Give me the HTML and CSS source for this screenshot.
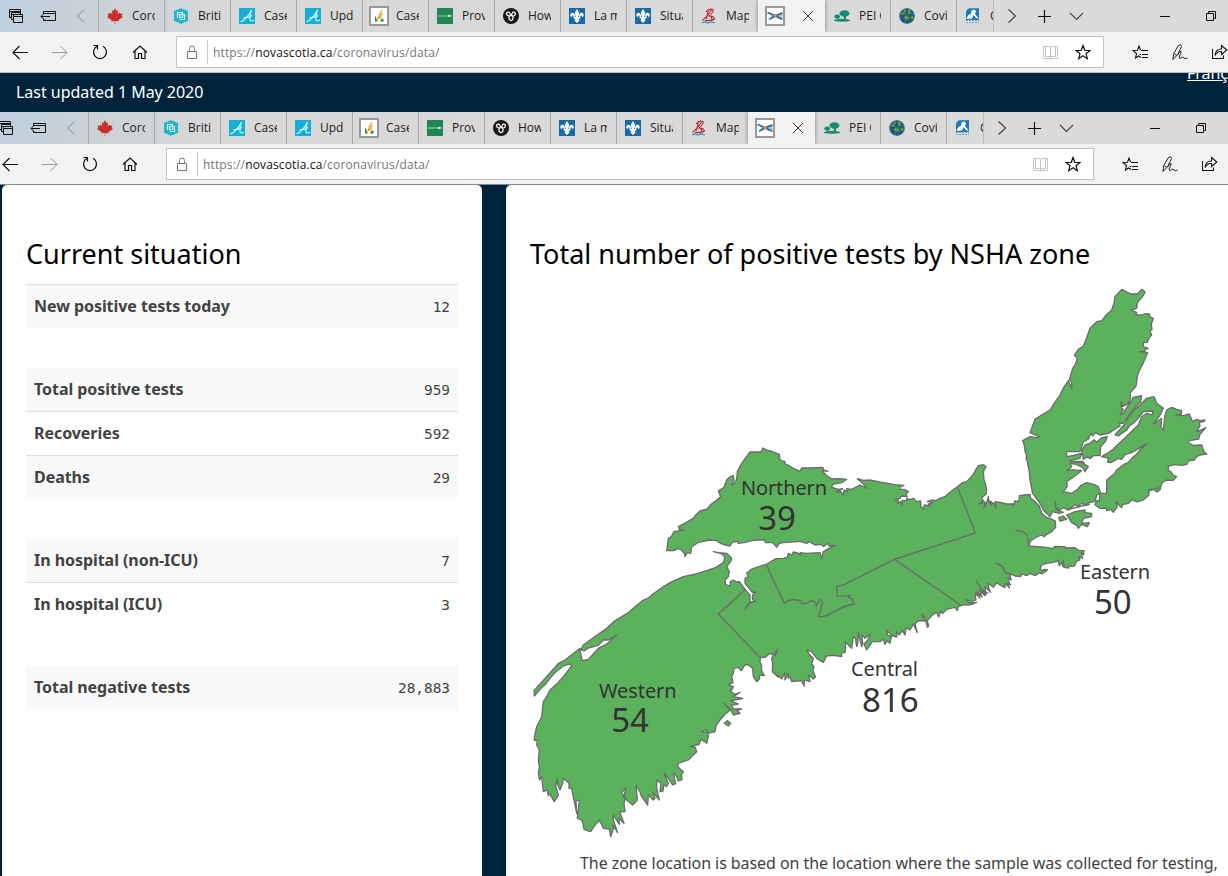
FILE: index.html
```html
<!DOCTYPE html>
<html lang="en">
<head>
<meta charset="utf-8">
<title>Nova Scotia COVID-19 data</title>
<link rel="stylesheet" href="styles.css">
</head>
<body>
<svg class="sprite" aria-hidden="true">
  <symbol id="i-windows" viewBox="0 0 16 16"><path d="M1.5 9.500V1.500H12.500M1.500 3.500H12M3.500 11.500V4.500H12.500M3.500 6.500H12M5.500 14.500V6.500H14.500V14.500H5.500ZM5.500 8.500H14.500M1.500 9.500H3.500M3.500 11.500H5.500M12.500 1.500V6" fill="none" stroke="#111"/></symbol>
  <symbol id="i-aside" viewBox="0 0 16 16"><path d="M3.500 6V3.500H15.500V12.500H3.500V10.500M3.500 5.500H15.500M1 8.500H10M4 5.500L1 8.500L4 11.500" fill="none" stroke="#111"/></symbol>
  <symbol id="i-prev" viewBox="0 0 16 16"><path d="M12.500 1.500L5.500 8L12.500 14.500" fill="none" stroke="#8b8f93"/></symbol>
  <symbol id="i-next" viewBox="0 0 16 16"><path d="M4.500 1.500L11.500 8L4.500 14.500" fill="none" stroke="#444" stroke-width="1.200"/></symbol>
  <symbol id="i-plus" viewBox="0 0 16 16"><path d="M8.500 2V15M2 8.500H15" fill="none" stroke="#111" stroke-width="1.200"/></symbol>
  <symbol id="i-down" viewBox="0 0 16 16"><path d="M2 5L8.500 11.500L15 5" fill="none" stroke="#444" stroke-width="1.100"/></symbol>
  <symbol id="i-min" viewBox="0 0 16 16"><path d="M3 8.500H13" stroke="#111"/></symbol>
  <symbol id="i-restore" viewBox="0 0 16 16"><path d="M3.500 5.500H10.500V12.500H3.500ZM5.500 5V3.500H12.500V10.500H11" fill="none" stroke="#111"/></symbol>
  <symbol id="i-x" viewBox="0 0 16 16"><path d="M3 3L13 13M13 3L3 13" stroke="#333"/></symbol>
  <symbol id="i-back" viewBox="0 0 16 16"><path d="M16 8.500H1M7.500 2L1 8.500L7.500 15" fill="none" stroke="#111" stroke-width="1.100"/></symbol>
  <symbol id="i-fwd" viewBox="0 0 16 16"><path d="M0 8.500H15M8.500 2L15 8.500L8.500 15" fill="none" stroke="#999"/></symbol>
  <symbol id="i-refresh" viewBox="0 0 16 16"><path d="M5 2.300A6.500 6.500 0 1 0 11 2.300M1.500 1.500H5.500V5.500" fill="none" stroke="#111" stroke-width="1.200"/></symbol>
  <symbol id="i-home" viewBox="0 0 16 16"><path d="M1 8.500L8 2L15 8.500M3 7V14.500H6.500V9.500H9.500V14.500H13V7" fill="none" stroke="#111" stroke-width="1.200"/></symbol>
  <symbol id="i-lock" viewBox="0 0 16 16"><path d="M3.500 7.500H12.500V14.500H3.500ZM5.500 7.500V4.500A2.500 2.500 0 0 1 10.500 4.500V7.500" fill="none" stroke="#777"/></symbol>
  <symbol id="i-book" viewBox="0 0 16 16"><path d="M1.500 2.500H7L8.500 3.500L10 2.500H15.500V14.500H10L8.500 15L7 14.500H1.500ZM3.500 3V12.500H7L8.500 13.500L10 12.500H13.500V3M8.500 3V15" fill="none" stroke="#c4c4c4"/></symbol>
  <symbol id="i-star" viewBox="0 0 16 16"><path d="M8 1.500L9.800 6.300L15 6.500L11 9.700L12.300 14.700L8 11.800L3.700 14.700L5 9.700L1 6.500L6.200 6.300Z" fill="none" stroke="#111" stroke-width="1.200"/></symbol>
  <symbol id="i-favs" viewBox="0 0 16 16"><path d="M9 6.500H16M10 10.500H16M10 13.500H16M8.500 6L7 2L5.500 6.300L1 6.500L4.500 9.500L3.500 14L6.500 12L9 13.500M7.500 10.500H9" fill="none" stroke="#111" stroke-width="1.100"/></symbol>
  <symbol id="i-pen" viewBox="0 0 16 16"><path d="M.8 15.500L2 9L6.500 1.500Q9 -.500 9.500 2.500L5.500 11L.8 15.500M5.500 11Q8 6.500 9 7.500Q9.500 8.500 7.500 12Q6.500 15.500 9 14Q11 12 12 14Q13 15.500 15.500 14M2.500 10L5 11.500" fill="none" stroke="#222"/></symbol>
  <symbol id="i-share" viewBox="0 0 16 16"><path d="M.5 5V14.500H11.500V11.500M3 11.500Q3.500 5 9.500 5V1.500L14.800 6L9.500 10.500V7.500Q5.500 7 3 11.500Z" fill="none" stroke="#111" stroke-width="1.100"/></symbol>

  <symbol id="f-leaf" viewBox="0 0 16 16"><path d="M8 0L9.500 3L11.200 2.200L10.600 6.200L12.800 4.500L13.500 5.700H15.500L14.700 8L16 9L11.500 12L11.800 13.300L8.300 12.900V16H7.700V12.900L4.200 13.300L4.500 12L0 9L1.300 8L.5 5.700H2.500L3.200 4.500L5.400 6.200L4.800 2.200L6.500 3Z" fill="#c9302c"/></symbol>
  <symbol id="f-bc" viewBox="0 0 16 16"><path d="M8 .2L15 3V12.800L8 15.800L1 12.800V3Z" fill="#22b5c9"/><path d="M4.500 10V4.500H9.500V9.500H6.500V6.500H11.500V11.500H6.500" fill="none" stroke="#e4f8fa" stroke-width="1.100"/></symbol>
  <symbol id="f-alberta" viewBox="0 0 16 16"><path d="M0 0H16V16H0Z" fill="#15aed4"/><path d="M1.500 14Q8 11 12.500 2Q10.500 7 11 12Q12 14 15 12M4.500 9.500Q9 10 13 7.500" fill="none" stroke="#d5f4fb" stroke-width="1.200"/></symbol>
  <symbol id="f-sask" viewBox="0 0 20 20"><path d="M1 1H19V19H1Z" fill="#fff" stroke="#999" stroke-width="2"/><path d="M6 15.500V9.500L9 15.500ZM11 15.500Q13 11 14.500 13V15.500Z" fill="#168052"/><path d="M5 17Q9 13 10 8Q11 5 14 3Q13 6 11.500 8L14.500 7Q13 9.500 11 11L14 10.500Q11 14 9 13" fill="#e9aa36"/></symbol>
  <symbol id="f-prov" viewBox="0 0 16 16"><path d="M0 0H16V16H0Z" fill="#208653"/><path d="M1 8H10" stroke="#cce7d8" stroke-width="1" stroke-dasharray="1.500 .5"/><path d="M10 8L12 6.800L15 8L12 9Z" fill="#fff"/></symbol>
  <symbol id="f-ont" viewBox="0 0 16 16"><circle cx="8" cy="8" r="8" fill="#181818"/><path d="M3.500 6Q3.500 3.800 6 4.200L8 7.300L10 4.200Q12.500 3.800 12.500 6Q12 8 9.700 8.200Q11 11.500 8 12.700Q5 11.500 6.300 8.200Q4 8 3.500 6ZM6.300 8.200L8 7.300L9.700 8.200" fill="none" stroke="#fff" stroke-width="1.200"/></symbol>
  <symbol id="f-que" viewBox="0 0 16 16"><path d="M0 0H16V16H0Z" fill="#176aa8"/><path d="M8 1Q11.500 5 9 9H10Q10 4 13.500 5Q16 7 13.500 9.500Q13.500 7 12 7.500Q11 8 11.500 10.500H9.500L10.500 12.500L8 15L5.500 12.500L6.500 10.500H4.500Q5 8 4 7.500Q2.500 7 2.500 9.500Q0 7 2.500 5Q6 4 6 9H7Q4.500 5 8 1Z" fill="#fff"/></symbol>
  <symbol id="f-nb" viewBox="0 0 16 16"><path d="M5 4Q8 0 12 1.500Q13 4 8 8Q13 8 13.500 11Q11 13 4 12.500M1.500 12.500Q6 9 10.500 2M5 11Q7 6 7 3M10 8L11 12" fill="none" stroke="#bd252e" stroke-width="1.100"/><path d="M1 15L4 13.800L7 15L10 13.800L14 15" fill="none" stroke="#3b94c9" stroke-width="1.300"/></symbol>
  <symbol id="f-ns" viewBox="0 0 20 20"><path d="M1 1H19V19H1Z" fill="#fff" stroke="#999" stroke-width="2"/><path d="M2.500 6.500Q6 8.500 10 8.500Q14 8 17.500 6.500V13.500Q14 13.500 10 11.500Q7 13.500 4 13.500Q7 11.500 5.500 9Z" fill="#9fc0de"/><path d="M2.500 6.500Q10 9 17.500 13.500M17.500 7Q10 9 4 13.500" fill="none" stroke="#245a99" stroke-width="1.400"/><path d="M8.500 8.500L11.500 11M11.500 8L9 11.500" stroke="#e88c35" stroke-width="1.300"/></symbol>
  <symbol id="f-pei" viewBox="0 0 16 16"><path d="M0 12Q8 9.500 16 12V13Q8 14.500 0 13ZM10 8H12V12H10ZM3 10H4V12H3Z" fill="#168b70"/><ellipse cx="10.500" cy="5.500" rx="5" ry="3.200" fill="#168b70"/><ellipse cx="3.200" cy="8.500" rx="2.800" ry="2" fill="#168b70"/></symbol>
  <symbol id="f-globe" viewBox="0 0 16 16"><circle cx="8" cy="8" r="7.800" fill="#24698e"/><path d="M2 5L5 2L7 3L5 6L3 7ZM8 3L11 1.500L13 5L10 6ZM5 8L9 7L10 10L7 13ZM11 8L14.500 8L13 12Z" fill="#83ba3b"/><path d="M1 8H15M8 0V16M2 4H14M2 12H14M4 2V14M12 2V14" stroke="#193e46" stroke-width=".8" opacity=".7"/></symbol>
  <symbol id="f-nl" viewBox="0 0 16 16"><path d="M1 4Q2 .5 5 .3H14V12H1Z" fill="#1d7ab8"/><path d="M1.500 11Q3 6 6 6L6.500 2.500L9 1.500L11 3L10 6L14 11L11 10L8.500 7L7 10.500Z" fill="#fff"/><path d="M1 12.500H14M1 14.500H14" stroke="#6ba7cf" stroke-dasharray="2 1"/></symbol>
</svg>

<section class="window">
  <header class="chrome">
    <div class="tabstrip">
      <div class="lead"><svg><use href="#i-windows"/></svg><svg><use href="#i-aside"/></svg><svg><use href="#i-prev"/></svg></div>
      <div class="tab"><svg><use href="#f-leaf"/></svg><span>Coro</span></div>
      <div class="tab"><svg><use href="#f-bc"/></svg><span>Briti</span></div>
      <div class="tab"><svg><use href="#f-alberta"/></svg><span>Case</span></div>
      <div class="tab"><svg><use href="#f-alberta"/></svg><span>Upd</span></div>
      <div class="tab"><svg class="framed"><use href="#f-sask"/></svg><span>Case</span></div>
      <div class="tab"><svg><use href="#f-prov"/></svg><span>Prov</span></div>
      <div class="tab"><svg><use href="#f-ont"/></svg><span>How</span></div>
      <div class="tab"><svg><use href="#f-que"/></svg><span>La m</span></div>
      <div class="tab"><svg><use href="#f-que"/></svg><span>Situa</span></div>
      <div class="tab"><svg><use href="#f-nb"/></svg><span>Map</span></div>
      <div class="tab active"><svg class="framed"><use href="#f-ns"/></svg><svg class="close"><use href="#i-x"/></svg></div>
      <div class="tab after"><svg><use href="#f-pei"/></svg><span>PEI C</span></div>
      <div class="tab"><svg><use href="#f-globe"/></svg><span>Covi</span></div>
      <div class="tab cut"><svg><use href="#f-nl"/></svg><span>C</span></div>
      <div class="strip-actions"><svg><use href="#i-next"/></svg><svg><use href="#i-plus"/></svg><svg><use href="#i-down"/></svg></div>
      <div class="window-actions"><svg><use href="#i-min"/></svg><svg><use href="#i-restore"/></svg></div>
    </div>
    <nav class="toolbar">
      <div class="tools"><svg><use href="#i-back"/></svg><svg><use href="#i-fwd"/></svg><svg><use href="#i-refresh"/></svg><svg><use href="#i-home"/></svg></div>
      <div class="address"><svg class="lock"><use href="#i-lock"/></svg><span class="url">https://<b>novascotia.ca</b>/coronavirus/data/</span><svg><use href="#i-book"/></svg><svg><use href="#i-star"/></svg></div>
      <div class="tools"><svg><use href="#i-favs"/></svg><svg><use href="#i-pen"/></svg><svg><use href="#i-share"/></svg></div>
    </nav>
  </header>
  <div class="updated"><span>Last updated 1 May 2020</span><a class="lang">Français</a></div>
</section>

<section class="window inner">
  <header class="chrome">
    <div class="tabstrip">
      <div class="lead"><svg><use href="#i-windows"/></svg><svg><use href="#i-aside"/></svg><svg><use href="#i-prev"/></svg></div>
      <div class="tab"><svg><use href="#f-leaf"/></svg><span>Coro</span></div>
      <div class="tab"><svg><use href="#f-bc"/></svg><span>Briti</span></div>
      <div class="tab"><svg><use href="#f-alberta"/></svg><span>Case</span></div>
      <div class="tab"><svg><use href="#f-alberta"/></svg><span>Upd</span></div>
      <div class="tab"><svg class="framed"><use href="#f-sask"/></svg><span>Case</span></div>
      <div class="tab"><svg><use href="#f-prov"/></svg><span>Prov</span></div>
      <div class="tab"><svg><use href="#f-ont"/></svg><span>How</span></div>
      <div class="tab"><svg><use href="#f-que"/></svg><span>La m</span></div>
      <div class="tab"><svg><use href="#f-que"/></svg><span>Situa</span></div>
      <div class="tab"><svg><use href="#f-nb"/></svg><span>Map</span></div>
      <div class="tab active"><svg class="framed"><use href="#f-ns"/></svg><svg class="close"><use href="#i-x"/></svg></div>
      <div class="tab after"><svg><use href="#f-pei"/></svg><span>PEI C</span></div>
      <div class="tab"><svg><use href="#f-globe"/></svg><span>Covi</span></div>
      <div class="tab cut"><svg><use href="#f-nl"/></svg><span>C</span></div>
      <div class="strip-actions"><svg><use href="#i-next"/></svg><svg><use href="#i-plus"/></svg><svg><use href="#i-down"/></svg></div>
      <div class="window-actions"><svg><use href="#i-min"/></svg><svg><use href="#i-restore"/></svg></div>
    </div>
    <nav class="toolbar">
      <div class="tools"><svg><use href="#i-back"/></svg><svg><use href="#i-fwd"/></svg><svg><use href="#i-refresh"/></svg><svg><use href="#i-home"/></svg></div>
      <div class="address"><svg class="lock"><use href="#i-lock"/></svg><span class="url">https://<b>novascotia.ca</b>/coronavirus/data/</span><svg><use href="#i-book"/></svg><svg><use href="#i-star"/></svg></div>
      <div class="tools"><svg><use href="#i-favs"/></svg><svg><use href="#i-pen"/></svg><svg><use href="#i-share"/></svg></div>
    </nav>
  </header>
</section>

<main class="cards">
  <section class="card situation">
    <h2>Current situation</h2>
    <dl class="group ruled"><div class="row shade"><dt>New positive tests today</dt><dd>12</dd></div></dl>
    <dl class="group">
      <div class="row shade"><dt>Total positive tests</dt><dd>959</dd></div>
      <div class="row"><dt>Recoveries</dt><dd>592</dd></div>
      <div class="row shade"><dt>Deaths</dt><dd>29</dd></div>
    </dl>
    <dl class="group">
      <div class="row shade"><dt>In hospital (non-ICU)</dt><dd>7</dd></div>
      <div class="row"><dt>In hospital (ICU)</dt><dd>3</dd></div>
    </dl>
    <dl class="group"><div class="row shade"><dt>Total negative tests</dt><dd>28,883</dd></div></dl>
  </section>
  <section class="card zones">
    <h2>Total number of positive tests by NSHA zone</h2>
    <svg class="map" viewBox="1590 840 2094 1710">
      <g class="land">
        <path d="M2000 1652L2003 1632L2005 1615L2014 1610L2022 1595L2038 1592L2052 1590L2038 1589L2035 1580L2058 1568L2080 1555L2087 1545L2100 1533L2122 1527L2134 1512L2150 1500L2162 1490L2155 1473L2172 1462L2180 1440L2190 1430L2200 1427L2202 1440L2195 1455L2203 1450L2210 1438L2212 1415L2225 1390L2240 1369L2250 1356L2284 1356L2288 1344L2302 1350L2315 1354L2338 1363L2339 1375L2343 1382L2354 1384L2357 1393L2368 1397L2380 1405L2400 1414L2405 1404L2434 1404L2468 1402L2472 1410L2484 1414L2466 1412L2478 1425L2495 1437L2520 1436L2540 1438L2525 1448L2498 1453L2495 1462L2515 1468L2528 1466L2510 1476L2522 1474L2530 1485L2532 1470L2543 1475L2540 1466L2555 1468L2580 1455L2602 1465L2588 1450L2572 1436L2590 1441L2610 1440L2634 1445L2650 1448L2685 1454L2712 1456L2700 1461L2700 1468L2712 1468L2725 1475L2717 1482L2722 1490L2704 1488L2700 1495L2685 1498L2695 1500L2693 1510L2702 1505L2705 1515L2707 1501L2720 1502L2720 1495L2730 1499L2740 1495L2750 1505L2762 1503L2762 1517L2770 1528L2773 1515L2790 1518L2785 1512L2800 1507L2782 1505L2795 1500L2807 1502L2820 1495L2836 1489L2850 1477L2872 1460L2887 1448L2900 1445L2920 1423L2928 1408L2935 1397L2950 1394L2958 1400L2950 1415L2952 1440L2956 1450L2960 1470L2958 1482L2945 1494L2950 1502L2937 1512L2955 1505L2952 1523L2960 1508L2965 1490L2967 1508L2975 1515L2970 1503L2982 1511L2988 1525L2985 1505L3000 1507L3020 1512L3040 1512L3039 1520L3045 1502L3055 1505L3058 1498L3058 1487L3074 1485L3090 1483L3092 1495L3100 1500L3118 1518L3125 1540L3139 1552L3150 1555L3166 1563L3167 1582L3155 1595L3140 1603L3132 1610L3125 1605L3105 1613L3090 1625L3087 1638L3140 1642L3157 1646L3165 1639L3195 1640L3196 1644L3225 1643L3236 1651L3252 1652L3251 1664L3244 1658L3248 1675L3235 1670L3240 1680L3230 1684L3224 1697L3215 1700L3208 1697L3206 1704L3192 1702L3190 1680L3189 1700L3184 1687L3178 1698L3175 1683L3155 1688L3140 1690L3125 1695L3120 1706L3128 1713L3132 1708L3143 1710L3125 1722L3118 1718L3105 1727L3090 1720L3080 1727L3065 1722L3062 1730L3045 1728L3032 1722L3031 1735L3023 1733L3035 1738L3024 1741L3032 1755L3022 1750L3029 1764L3015 1750L3015 1763L3000 1755L2990 1748L2980 1762L2965 1750L2966 1765L2972 1777L2955 1760L2958 1785L2944 1767L2954 1787L2938 1770L2946 1791L2929 1775L2940 1794L2925 1780L2928 1800L2915 1804L2895 1798L2908 1808L2930 1807L2918 1812L2905 1815L2890 1814L2875 1820L2872 1832L2865 1822L2840 1828L2828 1841L2822 1833L2816 1851L2810 1837L2797 1845L2782 1862L2786 1879L2782 1882L2775 1853L2765 1842L2774 1863L2755 1862L2745 1872L2752 1898L2740 1872L2730 1890L2719 1883L2715 1905L2707 1892L2697 1905L2690 1895L2690 1911L2675 1907L2660 1890L2663 1905L2674 1910L2670 1930L2661 1922L2655 1933L2650 1918L2640 1925L2617 1925L2600 1950L2592 1932L2602 1922L2611 1902L2595 1915L2585 1904L2588 1930L2585 1940L2575 1898L2574 1927L2570 1940L2566 1914L2560 1910L2555 1945L2535 1925L2537 1942L2535 1958L2525 1958L2525 1970L2500 1966L2480 1968L2470 1987L2450 1975L2435 1955L2420 1950L2430 1966L2440 1975L2435 1992L2442 2000L2439 2014L2447 2030L2440 2037L2426 2025L2430 2045L2413 2040L2412 2058L2405 2042L2390 2043L2375 2045L2370 2031L2365 2035L2365 2020L2355 2040L2355 2018L2345 2037L2335 2025L2335 2032L2317 2015L2318 1990L2315 1975L2320 1965L2332 1948L2326 1967L2310 1960L2296 1972L2282 1972L2280 1985L2285 1995L2284 2009L2293 2027L2278 2025L2279 2036L2270 2045L2260 2030L2258 2005L2245 1995L2235 1994L2230 2002L2225 2012L2213 2002L2202 2005L2200 2020L2195 2030L2199 2048L2185 2055L2200 2060L2192 2075L2205 2083L2220 2077L2200 2090L2228 2095L2217 2098L2192 2102L2215 2112L2194 2115L2201 2127L2225 2127L2211 2132L2220 2140L2200 2145L2192 2130L2173 2110L2190 2130L2173 2145L2160 2160L2149 2175L2145 2195L2125 2200L2118 2190L2105 2195L2123 2197L2125 2210L2120 2230L2103 2218L2097 2234L2070 2240L2086 2242L2090 2255L2076 2269L2065 2280L2035 2290L2033 2300L2050 2315L2044 2325L2046 2339L2035 2343L2029 2327L2020 2320L2027 2351L2018 2355L2005 2335L1992 2318L2005 2350L2000 2360L1992 2353L1989 2373L1980 2375L1983 2350L1970 2340L1970 2365L1978 2400L1958 2375L1965 2395L1960 2400L1945 2385L1943 2415L1925 2390L1920 2376L1908 2355L1912 2400L1898 2415L1880 2400L1872 2386L1878 2365L1865 2377L1875 2399L1872 2410L1875 2435L1859 2436L1872 2470L1857 2455L1858 2473L1840 2445L1840 2460L1853 2498L1838 2475L1840 2487L1832 2510L1828 2487L1810 2485L1803 2470L1798 2460L1784 2477L1772 2495L1752 2488L1749 2470L1745 2460L1732 2455L1738 2400L1728 2403L1730 2440L1723 2405L1718 2382L1715 2365L1707 2365L1707 2350L1690 2335L1688 2350L1680 2370L1673 2355L1672 2335L1667 2358L1675 2385L1663 2405L1648 2380L1645 2387L1642 2370L1630 2375L1625 2330L1619 2340L1615 2320L1618 2303L1615 2280L1618 2250L1610 2235L1612 2222L1602 2220L1605 2202L1610 2180L1625 2150L1627 2130L1630 2105L1640 2090L1650 2070L1674 2048L1690 2030L1715 1998L1710 1992L1690 1998L1668 2015L1650 2035L1638 2051L1625 2063L1603 2088L1602 2072L1645 2024L1666 2001L1675 1990L1695 1980L1740 1945L1743 1967L1747 1982L1765 1978L1795 1945L1820 1932L1850 1905L1825 1920L1810 1920L1795 1936L1765 1944L1752 1953L1743 1948L1750 1935L1784 1910L1820 1885L1841 1865L1885 1838L1904 1821L1930 1800L1945 1794L1962 1780L1990 1760L2016 1745L2050 1730L2087 1722L2120 1712L2148 1702L2170 1688L2175 1670L2164 1661L2140 1655L2157 1658L2180 1660L2195 1675L2192 1685L2180 1700L2188 1715L2185 1730L2175 1740L2177 1754L2190 1758L2191 1745L2200 1740L2211 1747L2217 1744L2225 1755L2235 1768L2250 1785L2250 1805L2235 1827L2255 1804L2267 1805L2257 1797L2258 1784L2268 1776L2257 1777L2235 1750L2235 1735L2245 1730L2240 1720L2255 1707L2300 1692L2328 1676L2350 1675L2362 1671L2365 1660L2376 1665L2380 1656L2390 1658L2402 1665L2400 1658L2420 1660L2460 1658L2463 1670L2465 1675L2470 1655L2485 1646L2505 1636L2487 1638L2485 1630L2470 1640L2464 1633L2445 1635L2428 1625L2420 1630L2400 1624L2350 1628L2338 1630L2330 1642L2318 1628L2297 1628L2292 1620L2275 1620L2255 1622L2236 1627L2215 1630L2212 1624L2198 1626L2190 1638L2175 1635L2161 1630L2150 1622L2130 1620L2095 1627L2075 1640L2072 1660L2061 1658L2055 1670L2054 1662L2045 1650L2033 1645L2022 1652Z"/>
        <path d="M3365 868L3378 875L3392 882L3412 882L3425 868L3435 875L3430 887L3412 908L3410 925L3392 930L3410 937L3408 945L3425 945L3437 941L3448 942L3449 950L3460 955L3454 972L3456 989L3450 992L3455 1005L3448 1012L3442 1027L3430 1027L3430 1040L3445 1045L3435 1048L3435 1055L3420 1055L3443 1058L3427 1095L3418 1112L3412 1130L3410 1148L3408 1158L3390 1180L3392 1190L3385 1210L3368 1220L3364 1205L3364 1224L3370 1228L3360 1245L3369 1240L3400 1192L3425 1187L3422 1205L3405 1222L3385 1248L3370 1270L3359 1269L3360 1278L3325 1300L3300 1305L3286 1298L3278 1308L3272 1300L3266 1317L3250 1326L3245 1340L3240 1355L3200 1355L3200 1370L3222 1366L3245 1360L3240 1375L3208 1382L3225 1386L3245 1388L3265 1400L3255 1415L3248 1402L3224 1392L3210 1390L3215 1400L3200 1412L3216 1409L3245 1412L3225 1428L3200 1445L3202 1459L3190 1475L3215 1480L3234 1467L3244 1455L3260 1448L3281 1453L3295 1460L3302 1480L3290 1485L3285 1505L3265 1508L3260 1516L3245 1510L3235 1520L3225 1514L3205 1530L3190 1523L3178 1531L3168 1523L3165 1505L3168 1529L3190 1537L3178 1540L3158 1535L3150 1550L3130 1530L3120 1510L3098 1480L3090 1440L3088 1418L3082 1385L3078 1375L3080 1366L3075 1355L3074 1340L3068 1322L3090 1310L3110 1313L3118 1310L3104 1304L3090 1298L3105 1258L3127 1244L3150 1230L3162 1211L3180 1185L3189 1166L3205 1142L3216 1166L3215 1147L3208 1139L3218 1105L3226 1093L3232 1075L3223 1066L3235 1048L3250 1038L3260 1013L3270 985L3290 965L3305 962L3318 946L3335 930L3342 910L3345 890Z"/>
        <path d="M3320 1480L3320 1440L3345 1420L3350 1410L3370 1394L3384 1388L3400 1370L3410 1363L3422 1347L3442 1330L3420 1343L3395 1358L3376 1363L3365 1378L3355 1375L3332 1388L3322 1386L3326 1375L3305 1370L3320 1361L3340 1347L3415 1275L3425 1250L3440 1240L3455 1245L3460 1233L3430 1235L3418 1251L3400 1270L3390 1276L3380 1290L3355 1308L3345 1305L3365 1282L3377 1270L3380 1260L3402 1230L3420 1215L3440 1195L3462 1190L3470 1210L3490 1225L3480 1246L3460 1272L3485 1255L3483 1282L3490 1290L3495 1245L3500 1230L3515 1222L3530 1228L3545 1232L3544 1243L3528 1245L3550 1247L3568 1242L3578 1265L3590 1258L3600 1262L3615 1260L3612 1265L3598 1267L3600 1278L3590 1295L3605 1289L3618 1283L3600 1303L3596 1317L3568 1322L3565 1329L3580 1336L3605 1335L3612 1355L3620 1362L3600 1365L3590 1370L3582 1381L3568 1380L3560 1393L3545 1396L3525 1394L3505 1398L3505 1410L3515 1417L3518 1425L3530 1430L3520 1441L3500 1440L3485 1450L3480 1470L3471 1476L3459 1467L3447 1469L3447 1485L3430 1500L3412 1506L3395 1500L3385 1510L3368 1514L3365 1523L3347 1505L3352 1520L3340 1537L3333 1528L3320 1532L3320 1525L3300 1525L3285 1515L3290 1502L3298 1502L3300 1480Z"/>
        <path d="M3245 1350L3256 1334L3270 1330L3282 1319L3290 1327L3304 1314L3322 1310L3316 1325L3302 1340L3300 1367L3280 1367L3270 1376L3263 1370L3250 1378Z"/>
        <path d="M3200 1545L3225 1535L3255 1530L3255 1538L3275 1540L3275 1550L3250 1555L3245 1570L3268 1568L3262 1580L3245 1573L3235 1585L3230 1576L3215 1568Z"/>
        <path d="M3176 1553L3190 1548L3200 1558L3180 1563Z"/>
        <path d="M2173 2170L2182 2162L2192 2170L2185 2178Z"/>
      </g>
      <path class="border" d="M2237 1768L2155 1842L2280 1972M2298 1693L2353 1810Q2370 1795 2390 1800Q2407 1800 2406 1811Q2420 1813 2431 1803Q2447 1800 2449 1817Q2465 1785 2467 1808Q2463 1829 2455 1850Q2470 1853 2492 1841Q2530 1817 2563 1812L2556 1797L2545 1793L2550 1787L2512 1790L2510 1760L2530 1755L2683 1678L2926 1599L2872 1460M2683 1678L2885 1817M3046 1592L3068 1594L3082 1606L3087 1638M2986 1688L3008 1700L3016 1718L3032 1722M2928 1740L2945 1770L2965 1780M3200 1530L3270 1512M3220 1384L3248 1384L3258 1398M3448 1473L3478 1463"/>
      <g class="label">
        <text x="2223" y="1484" textLength="258">Northern</text><text class="num" x="2275" y="1590" textLength="113">39</text>
        <text x="1797" y="2093" textLength="233">Western</text><text class="num" x="1834" y="2196" textLength="113">54</text>
        <text x="3240" y="1736" textLength="210">Eastern</text><text class="num" x="3282" y="1842" textLength="113">50</text>
        <text x="2553" y="2027" textLength="201">Central</text><text class="num" x="2586" y="2136" textLength="170">816</text>
      </g>
    </svg>
    <p class="note">The zone location is based on the location where the sample was collected for testing,</p>
  </section>
</main>
</body>
</html>
```

FILE: styles.css
```css
* { box-sizing: border-box; }
body {
  margin: 0;
  width: 1228px;
  height: 876px;
  overflow: hidden;
  background: #00233c;
  font-family: "Noto Sans", "Open Sans", sans-serif;
  color: #424242;
}
.sprite { display: none; }
svg { flex: none; }
.window { overflow: hidden; }
.chrome { width: 1240px; border-bottom: 1px solid #bfbfbf; }
.inner .chrome { margin-left: -10px; width: 1250px; border-bottom-color: #7d8b94; }
.chrome svg { width: 16px; height: 16px; }

.tabstrip {
  display: flex;
  height: 32px;
  background: linear-gradient(90deg, #bdcfdf 0, #cad1d7 90px, #d8d8d8 240px, #dbdbdb);
}
.lead { display: flex; gap: 16px; width: 98px; padding: 8px 0 0 8px; }
.tab {
  display: flex;
  flex: none;
  gap: 9px;
  width: 66px;
  padding: 8px 9px 0 8px;
  border-left: 1px solid #a8a8a8;
  font: 12px/16px "Open Sans", sans-serif;
  color: #222;
}
.tab span { overflow: hidden; white-space: nowrap; width: 23px; }
.chrome .tab .framed { width: 20px; height: 20px; margin: -2px -2px 0; }
.tab.active {
  width: 67px;
  gap: 16px;
  background: #f2f2f2;
  border-left-color: #f2f2f2;
  box-shadow: 0 0 4px #777;
  clip-path: inset(0 -5px 0 -5px);
}
.tab.active .close { margin-left: 1px; }
.tab.after { width: 65px; border-left-color: transparent; }
.tab.cut { width: 38px; border-right: 1px solid #bbb; padding-right: 0; }
.tab.cut span { width: 3px; }
.strip-actions { display: flex; gap: 16px; padding: 8px 0 0 10px; }
.window-actions { display: flex; gap: 30px; padding: 8px 0 0 73px; }

.toolbar { display: flex; height: 40px; padding-top: 4px; background: #f2f2f2; }
.tools { display: flex; gap: 24px; padding: 8px 12px 0; }
.tools + .address { margin-left: 4px; margin-right: 16px; }
.tools:first-child { width: 172px; }
.address {
  display: flex;
  align-items: center;
  flex: none;
  width: 928px;
  height: 32px;
  padding: 0 12px 0 7px;
  background: #fff;
  border: 1px solid #c4c4c4;
}
.address svg + svg { margin-left: 17px; }
.url {
  flex: 1;
  margin-left: 7px;
  padding-left: 5px;
  border-left: 1px solid #ccc;
  font: 12px/24px "Open Sans", sans-serif;
  letter-spacing: 0.15px;
  padding-top: 1px;
  height: 24px;
  color: #777;
}
.url b { font-weight: 400; color: #111; }

.updated {
  position: relative;
  display: flex;
  height: 39px;
  overflow: hidden;
  padding-left: 16px;
  line-height: 38px;
  font-size: 16px;
  letter-spacing: -0.03px;
  color: #fff;
}
.lang { position: absolute; left: 1187px; top: -12px; font-size: 16px; line-height: 24px; text-decoration: underline; }

.cards { display: flex; gap: 24px; padding-left: 2px; height: 692px; }
.card { flex: none; height: 692px; padding: 47px 24px 0; background: #fff; border-radius: 5px 5px 0 0; }
.situation { width: 480px; }
.zones { width: 742px; border-radius: 5px 0 0 0; white-space: nowrap; }
h2 { margin: 0 0 8px; font-size: 27px; line-height: 44px; font-weight: 400; color: #000; }
.group { margin: 0 0 40px; }
.ruled { border-top: 1px solid #ddd; }
.row { display: flex; justify-content: space-between; height: 43px; padding: 0 8px; line-height: 43px; }
.row + .row { height: 44px; border-top: 1px solid #ddd; }
.shade { background: #f9f9f9; }
dt { font-size: 16px; font-weight: 700; letter-spacing: -0.05px; }
dd { margin: 0; font: 14.4px/44px "DejaVu Sans Mono", monospace; }

.map { display: block; width: 698px; height: 570px; margin-top: -4px; }
.land { fill: #5cb25c; stroke: #6b6b6b; stroke-width: 3.9; stroke-linejoin: round; }
.border { fill: none; stroke: #6b6b6b; stroke-width: 3.9; }
.label { fill: #333; font-size: 60px; }
.num { font-size: 99px; }
.note { margin: 0 0 0 50px; font-size: 16px; line-height: 26px; letter-spacing: -0.07px; }
```
